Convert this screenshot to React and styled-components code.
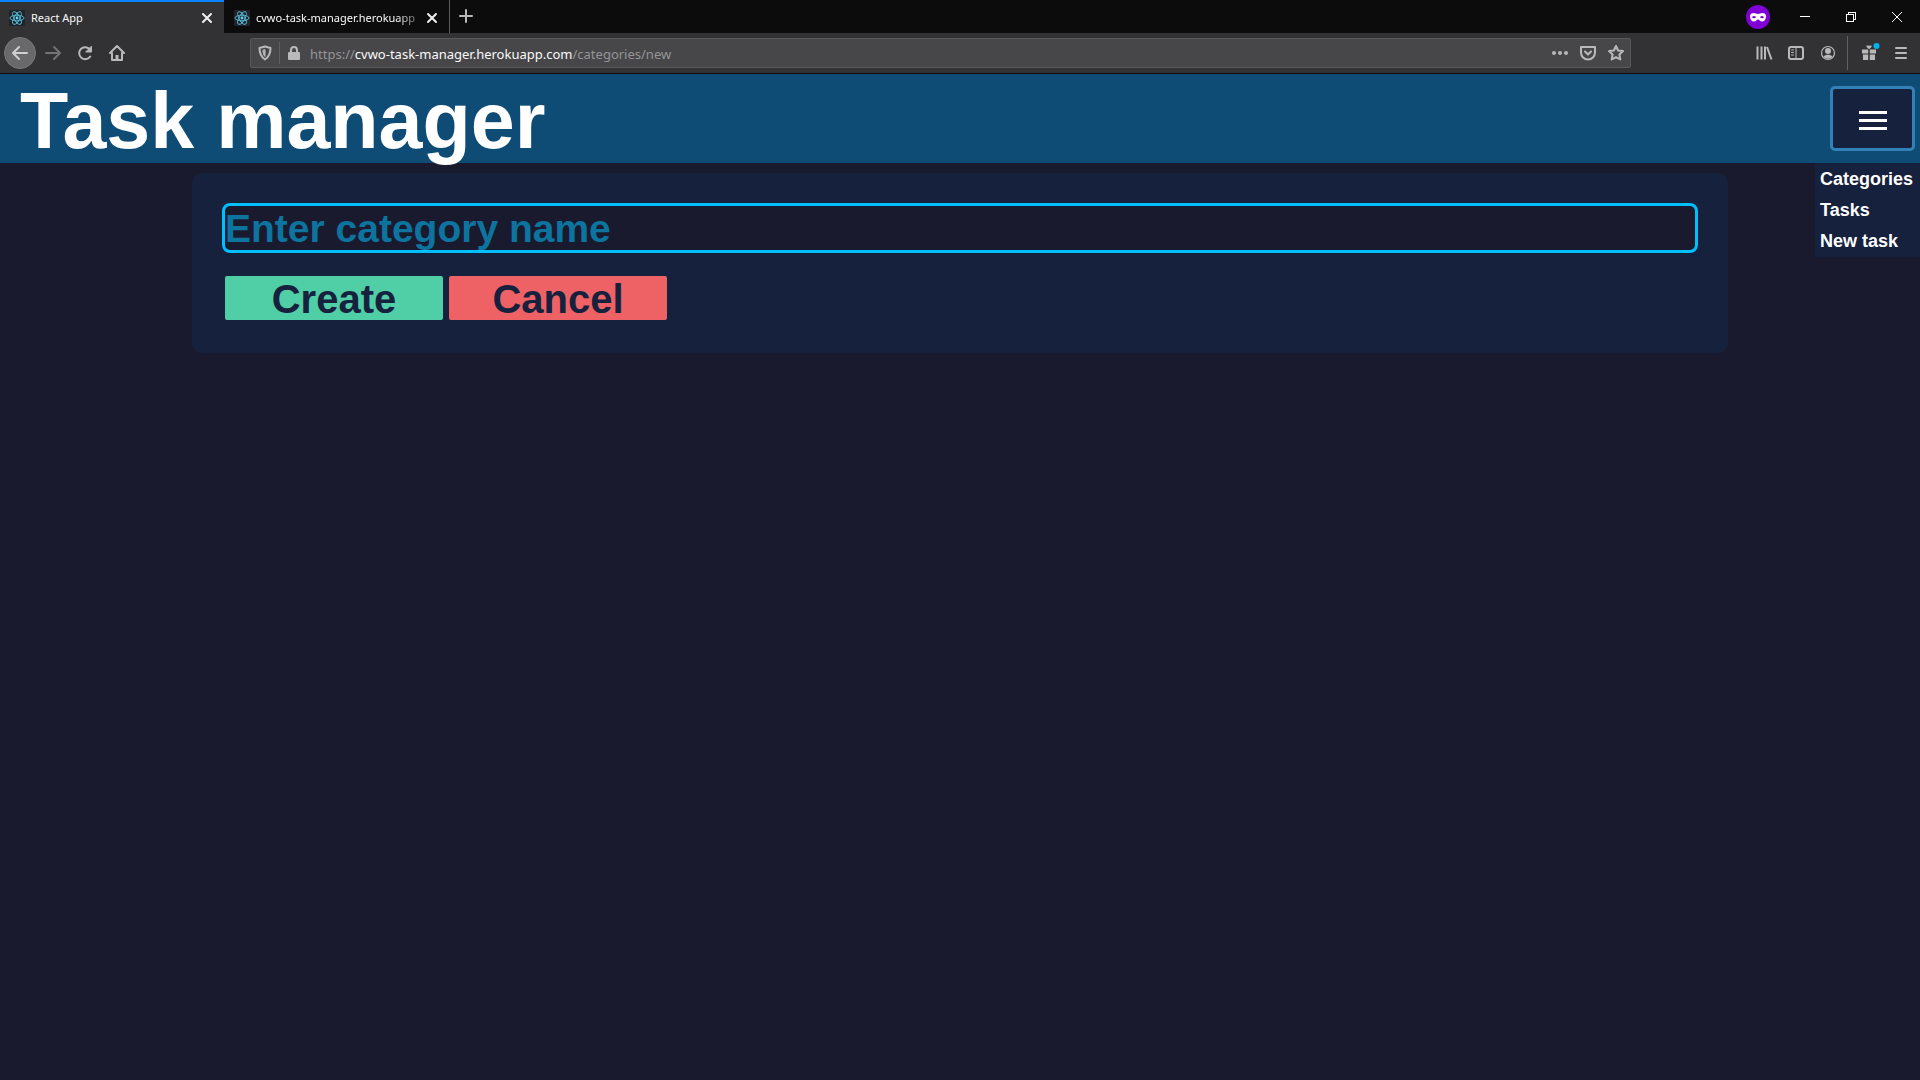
import React from "react";
import styled, { createGlobalStyle, css } from "styled-components";

const ui = `"Noto Sans", "Open Sans", sans-serif`;
const page = `"Liberation Sans", Arial, sans-serif`;

const Global = createGlobalStyle`
  *, *::before, *::after { box-sizing: border-box; }
  body { margin: 0; background: #1a1a2e; font-family: ${page}; }
  button, input { font: inherit; margin: 0; }
`;

/* ---------- browser window ---------- */

const TabStrip = styled.div`
  display: flex;
  height: 33px;
  background: #0c0c0d;
  font-family: ${ui};
  font-size: 11px;
  color: #f9f9fa;
`;

const Tab = styled.div`
  display: flex;
  align-items: center;
  width: 225px;
  padding: 2px 6px 0 9px;
  border-right: 1px solid ${(p) => (p.$active ? "#0c0c0d" : "#5a5a5c")};
  ${(p) =>
    p.$active &&
    css`
      background: #323234;
      box-shadow: inset 0 2px #0a84ff;
    `}
`;

const TabTitle = styled.span`
  flex: 1;
  min-width: 0;
  margin-left: 6px;
  white-space: nowrap;
  ${(p) => p.$fade && css`mask-image: linear-gradient(to right, #000 85%, rgba(0, 0, 0, 0.2));`}
`;

const IconButton = styled.button`
  display: flex;
  align-items: center;
  justify-content: center;
  flex: none;
  width: ${(p) => p.$w || 32}px;
  height: ${(p) => p.$h || 32}px;
  padding: 0;
  border: 0;
  border-radius: 2px;
  background: none;
  color: ${(p) => p.$color || "#b9b9ba"};
`;

const BackButton = styled(IconButton)`
  margin-right: 1px;
  border: 1px solid #777779;
  border-radius: 50%;
  background: #69696b;
  color: #d0d0d1;
`;

const WindowControls = styled.div`
  display: flex;
  align-items: center;
  margin-left: auto;
`;

const Badge = styled.div`
  display: flex;
  margin-right: 12px;
`;

const Toolbar = styled.div`
  display: flex;
  align-items: center;
  height: 41px;
  padding: 0 3px 0 4px;
  background: #323234;
  border-bottom: 1px solid #0c0c0d;
`;

const Spacer = styled.div`
  flex: 1;
`;

const AddressBar = styled.div`
  display: flex;
  align-items: center;
  flex: 0 1 1381px;
  height: 30px;
  border: 1px solid #5a5a5c;
  border-radius: 2px;
  background: #474749;
`;

const Url = styled.a`
  flex: 1;
  margin-left: 2px;
  padding-top: 2px;
  font-family: ${ui};
  font-size: 13px;
  line-height: 20px;
  color: #949496;
  text-decoration: none;
  white-space: nowrap;
  b { font-weight: 400; color: #f9f9fa; }
`;

const Rule = styled.div`
  width: 1px;
  height: ${(p) => p.$h}px;
  margin: ${(p) => p.$margin || 0};
  background: #5f5f61;
`;

/* ---------- task manager ---------- */

const Header = styled.header`
  position: relative;
  display: flex;
  align-items: center;
  justify-content: space-between;
  height: 89px;
  padding: 0 5px 0 20px;
  background: #0f4c75;
`;

const Title = styled.h1`
  margin: 0;
  padding-top: 4px;
  font-size: 79px;
  line-height: 85px;
  color: #fff;
`;

const MenuButton = styled.button`
  display: flex;
  align-items: center;
  justify-content: center;
  width: 85px;
  height: 65px;
  padding: 4px 0 0;
  border: 3px solid #3282b8;
  border-radius: 5px;
  background: #16213e;
  color: #fff;
`;

const Menu = styled.nav`
  position: absolute;
  top: 100%;
  right: 0;
  display: flex;
  flex-direction: column;
  min-width: 105px;
  padding: 1px 5px 0;
  background: #16213e;
`;

const MenuLink = styled.a`
  font-size: 18px;
  font-weight: 700;
  line-height: 31px;
  color: #fff;
  text-decoration: none;
`;

const Card = styled.form`
  width: 80%;
  margin: 10px auto;
  padding: 30px;
  border-radius: 10px;
  background: #16213e;
`;

const NameInput = styled.input`
  display: block;
  width: 100%;
  height: 50px;
  padding: 2px 0 0;
  border: 3px solid #00bfff;
  border-radius: 8px;
  outline: 0;
  background: #1a1a2e;
  font-size: 39px;
  font-weight: 700;
  color: #00bfff;
  &::placeholder { color: #0d739f; opacity: 1; }
`;

const Actions = styled.div`
  display: flex;
  margin-top: 20px;
`;

const ActionButton = styled.button`
  width: 224px;
  height: 50px;
  padding: 2px 0 0;
  border: 3px solid #16213e;
  border-radius: 5px;
  background: ${(p) => p.$color};
  font-size: 40px;
  font-weight: 700;
  line-height: 42px;
  color: #16213e;
`;

/* ---------- icons ---------- */

const Icon = ({ size = 16, w = 2, children }) => (
  <svg width={size} height={size} viewBox="0 0 16 16" fill="none" stroke="currentColor"
    strokeWidth={w} strokeLinecap="round" strokeLinejoin="round" overflow="visible" aria-hidden="true">
    {children}
  </svg>
);

const ReactLogo = () => (
  <svg width="16" height="16" viewBox="0 0 16 16" aria-hidden="true">
    <rect width="16" height="16" rx="1" fill="#20232a" />
    <g fill="none" stroke="#58c0dc" strokeWidth="0.9">
      <ellipse cx="8" cy="8" rx="7" ry="2.8" />
      <ellipse cx="8" cy="8" rx="7" ry="2.8" transform="rotate(60 8 8)" />
      <ellipse cx="8" cy="8" rx="7" ry="2.8" transform="rotate(120 8 8)" />
    </g>
    <circle cx="8" cy="8" r="1.4" fill="#61dafb" />
  </svg>
);

const CloseIcon = () => <Icon><path d="M4 4l8 8M12 4l-8 8" /></Icon>;

const MaskBadge = () => (
  <svg width="24" height="24" viewBox="0 0 24 24" aria-hidden="true">
    <circle cx="12" cy="12" r="12" fill="#8000d7" />
    <path fill="#fff" fillRule="evenodd" d="M4 11.500C4 9 5.400 8 7.500 8c2 0 3 1 4.500 1s2.500-1 4.500-1C18.600 8 20 9 20 11.500c0 3-1.800 5-4 5-2 0-2.800-2-4-2s-2 2-4 2c-2.200 0-4-2-4-5zM6 12.200c.8 1.400 3.200 1.400 4 0-.8-1.500-3.200-1.500-4 0zM14 12.200c.8 1.400 3.200 1.400 4 0-.8-1.500-3.200-1.500-4 0z" />
  </svg>
);

const Browser = () => (
  <>
    <TabStrip>
      <Tab $active>
        <ReactLogo />
        <TabTitle>React App</TabTitle>
        <IconButton $w={22} $h={22} $color="#f0f0f1" aria-label="Close tab"><CloseIcon /></IconButton>
      </Tab>
      <Tab>
        <ReactLogo />
        <TabTitle $fade>cvwo-task-manager.herokuapp</TabTitle>
        <IconButton $w={22} $h={22} $color="#f0f0f1" aria-label="Close tab"><CloseIcon /></IconButton>
      </Tab>
      <IconButton aria-label="New tab"><Icon><path d="M8 2v12M2 8h12" /></Icon></IconButton>
      <WindowControls>
        <Badge><MaskBadge /></Badge>
        <IconButton $w={46} $color="#fff" aria-label="Minimise">
          <svg width="10" height="10" shapeRendering="crispEdges"><path d="M0 4.500h10" stroke="currentColor" /></svg>
        </IconButton>
        <IconButton $w={46} $color="#fff" aria-label="Restore">
          <svg width="10" height="10" fill="none" stroke="currentColor" shapeRendering="crispEdges"><path d="M.5 2.500h7v7h-7zM2.500 2.500v-2h7v7h-2" /></svg>
        </IconButton>
        <IconButton $w={46} $color="#fff" aria-label="Close">
          <svg width="10" height="10" stroke="currentColor"><path d="M0 0l10 10M10 0L0 10" /></svg>
        </IconButton>
      </WindowControls>
    </TabStrip>
    <Toolbar>
      <BackButton aria-label="Back"><Icon><path d="M15 8H1.500M7 2L1 8l6 6" /></Icon></BackButton>
      <IconButton $color="#727274" aria-label="Forward"><Icon><path d="M1 8h13.500M9 2l6 6-6 6" /></Icon></IconButton>
      <IconButton aria-label="Reload"><Icon><path d="M13.200 11.500A6 6 0 1 1 12.500 4" /><path d="M14.500 1.500V7H9z" fill="currentColor" strokeWidth="1" /></Icon></IconButton>
      <IconButton aria-label="Home"><Icon><path d="M1 8l7-7 7 7M3 8v7h10V8" /><path d="M8 10v4" strokeWidth="3" strokeLinecap="butt" /></Icon></IconButton>
      <Spacer />
      <AddressBar>
        <IconButton $w={28} $h={28} aria-label="Tracking protection"><Icon><path d="M8 1.500L13.500 3c0 6-1.500 9-5.500 11.500C4 12 2.500 9 2.500 3z" /><path d="M8 5v6.500C6.500 10 6 8 6 5.500z" fill="currentColor" strokeWidth="1" /></Icon></IconButton>
        <Rule $h={22} />
        <IconButton $w={28} $h={28} aria-label="Connection secure"><Icon><rect x="3" y="8" width="10" height="6" fill="currentColor" /><path d="M5 8V5a3 3 0 0 1 6 0v3" /></Icon></IconButton>
        <Url href="#">https://<b>cvwo-task-manager.herokuapp.com</b>/categories/new</Url>
        <IconButton $w={28} $h={28} aria-label="Page actions"><Icon><g fill="currentColor" stroke="none"><circle cx="2" cy="8" r="2" /><circle cx="8" cy="8" r="2" /><circle cx="14" cy="8" r="2" /></g></Icon></IconButton>
        <IconButton $w={28} $h={28} aria-label="Save to Pocket"><Icon><path d="M1 2h14v5.500a7 7 0 0 1-14 0z" /><path d="M5 6.500l3 3 3-3" /></Icon></IconButton>
        <IconButton $w={28} $h={28} aria-label="Bookmark"><Icon><path d="M8 1l2.100 4.500 4.900.6-3.600 3.400.9 5L8 12.100l-4.300 2.400.9-5L1 6.100l4.900-.6z" /></Icon></IconButton>
      </AddressBar>
      <Spacer />
      <IconButton aria-label="Library"><Icon><path d="M1.500 1.500v13M5.500 1.500v13M9 1.500v13M11 2l4.500 12.500" strokeLinecap="butt" /></Icon></IconButton>
      <IconButton aria-label="Sidebars"><Icon><rect x="1" y="2" width="14" height="12" rx="2" /><path d="M8 2v12M3.500 5h2M3.500 7.500h2M3.500 10h2" strokeWidth="1" /></Icon></IconButton>
      <IconButton aria-label="Account"><Icon><circle cx="8" cy="8" r="6.500" strokeWidth="1.200" /><circle cx="8" cy="6" r="3" fill="currentColor" stroke="none" /><path d="M3.500 11.500c2-2.500 7-2.500 9 0-2 3-7 3-9 0z" fill="currentColor" stroke="none" /></Icon></IconButton>
      <Rule $h={34} $margin="0 5px 0 3px" />
      <IconButton aria-label="What's new">
        <Icon><g fill="currentColor" stroke="none"><path d="M1 4.500h6.200v4H1zM8.800 4.500H15v4H8.800zM2 9.500h5.200V15H2zM8.800 9.500H14V15H8.800zM5.500.5h2l.5.8.5-.8h2v1.500L8 4.200 5.500 2z" /></g><circle cx="15.500" cy="1" r="3" fill="#00b3f4" stroke="none" /></Icon>
      </IconButton>
      <IconButton aria-label="Open menu"><Icon><path d="M3 3h10M3 8h10M3 13h10" /></Icon></IconButton>
    </Toolbar>
  </>
);

export default function App() {
  return (
    <>
      <Global />
      <Browser />
      <Header>
        <Title>Task manager</Title>
        <MenuButton aria-label="Menu">
          <svg width="28" height="20" shapeRendering="crispEdges" aria-hidden="true">
            <path d="M0 1.500h28M0 9.500h28M0 17.500h28" stroke="currentColor" strokeWidth="3" />
          </svg>
        </MenuButton>
        <Menu>
          <MenuLink href="#categories">Categories</MenuLink>
          <MenuLink href="#tasks">Tasks</MenuLink>
          <MenuLink href="#new-task">New task</MenuLink>
        </Menu>
      </Header>
      <main>
        <Card onSubmit={(e) => e.preventDefault()}>
          <NameInput aria-label="Category name" placeholder="Enter category name" />
          <Actions>
            <ActionButton $color="#50cea6">Create</ActionButton>
            <ActionButton type="button" $color="#ee6266">Cancel</ActionButton>
          </Actions>
        </Card>
      </main>
    </>
  );
}
